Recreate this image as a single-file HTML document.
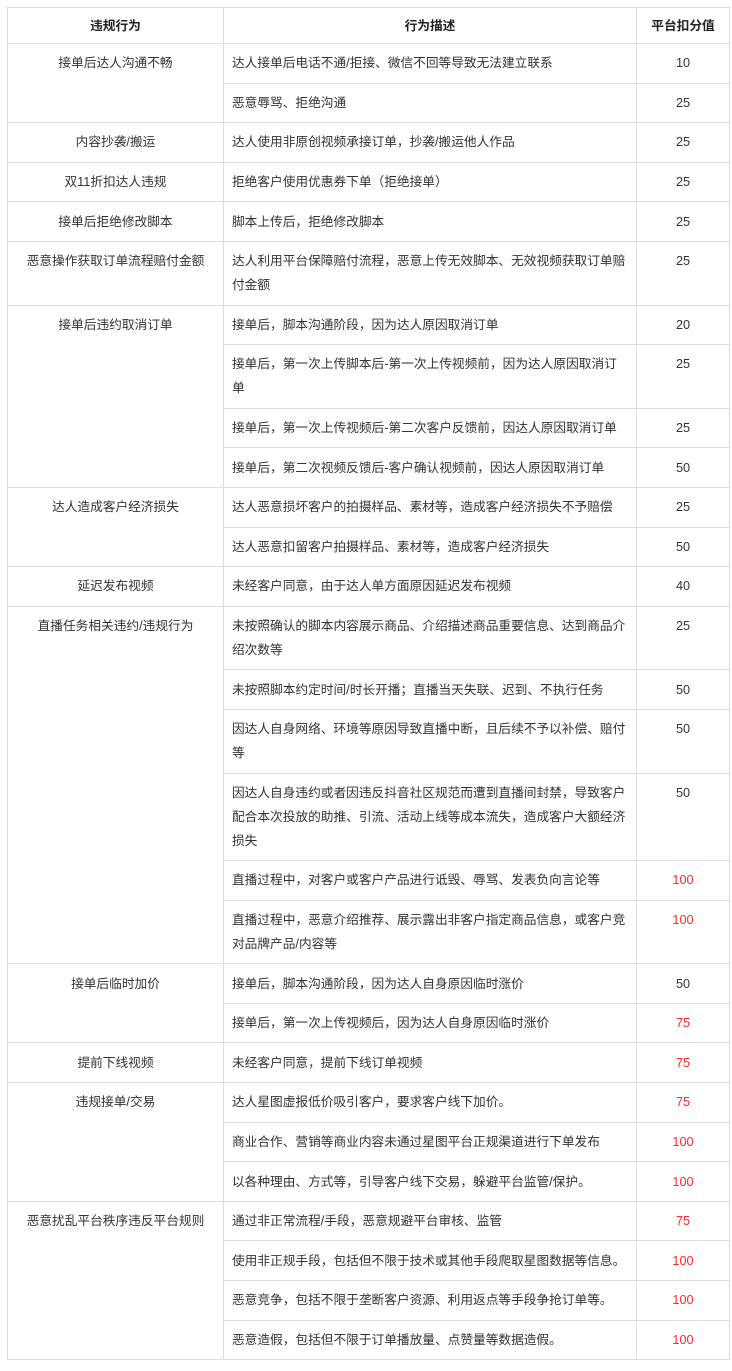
<!DOCTYPE html>
<html><head><meta charset="utf-8"><style>
html,body{margin:0;padding:0;background:#fff;width:732px;height:1371px;overflow:hidden}
table{position:absolute;left:7px;top:7px;border-collapse:collapse;table-layout:fixed;width:722px;font-family:"Liberation Sans","Noto Sans CJK SC",sans-serif;font-size:12.7px;color:#333}
td,th{border:1px solid #ddd;padding:7.3px 8px;vertical-align:top;white-space:nowrap;overflow:visible}
td div{line-height:24px;height:24px;overflow:visible}
td div.d{height:48px}
td div.t{height:72px}
th{font-weight:bold;text-align:center;padding:7.5px 8px 7.5px;color:#222}
th div{height:20px;line-height:20px}
td.a,td.c{text-align:center}
.r{color:#ff2a2a}
</style></head><body>
<table>
<colgroup><col style="width:216px"><col style="width:413px"><col style="width:93px"></colgroup>
<tr><th><div>违规行为</div></th><th><div>行为描述</div></th><th><div>平台扣分值</div></th></tr>
<tr><td class="a" rowspan="2"><div>接单后达人沟通不畅</div></td><td><div>达人接单后电话不通/拒接、微信不回等导致无法建立联系</div></td><td class="c"><div>10</div></td></tr>
<tr><td><div>恶意辱骂、拒绝沟通</div></td><td class="c"><div>25</div></td></tr>
<tr><td class="a"><div>内容抄袭/搬运</div></td><td><div>达人使用非原创视频承接订单，抄袭/搬运他人作品</div></td><td class="c"><div>25</div></td></tr>
<tr><td class="a"><div>双11折扣达人违规</div></td><td><div>拒绝客户使用优惠券下单（拒绝接单）</div></td><td class="c"><div>25</div></td></tr>
<tr><td class="a"><div>接单后拒绝修改脚本</div></td><td><div>脚本上传后，拒绝修改脚本</div></td><td class="c"><div>25</div></td></tr>
<tr><td class="a"><div>恶意操作获取订单流程赔付金额</div></td><td><div class="d">达人利用平台保障赔付流程，恶意上传无效脚本、无效视频获取订单赔<br>付金额</div></td><td class="c"><div>25</div></td></tr>
<tr><td class="a" rowspan="4"><div>接单后违约取消订单</div></td><td><div>接单后，脚本沟通阶段，因为达人原因取消订单</div></td><td class="c"><div>20</div></td></tr>
<tr><td><div class="d">接单后，第一次上传脚本后-第一次上传视频前，因为达人原因取消订<br>单</div></td><td class="c"><div>25</div></td></tr>
<tr><td><div>接单后，第一次上传视频后-第二次客户反馈前，因达人原因取消订单</div></td><td class="c"><div>25</div></td></tr>
<tr><td><div>接单后，第二次视频反馈后-客户确认视频前，因达人原因取消订单</div></td><td class="c"><div>50</div></td></tr>
<tr><td class="a" rowspan="2"><div>达人造成客户经济损失</div></td><td><div>达人恶意损坏客户的拍摄样品、素材等，造成客户经济损失不予赔偿</div></td><td class="c"><div>25</div></td></tr>
<tr><td><div>达人恶意扣留客户拍摄样品、素材等，造成客户经济损失</div></td><td class="c"><div>50</div></td></tr>
<tr><td class="a"><div>延迟发布视频</div></td><td><div>未经客户同意，由于达人单方面原因延迟发布视频</div></td><td class="c"><div>40</div></td></tr>
<tr><td class="a" rowspan="6"><div>直播任务相关违约/违规行为</div></td><td><div class="d">未按照确认的脚本内容展示商品、介绍描述商品重要信息、达到商品介<br>绍次数等</div></td><td class="c"><div>25</div></td></tr>
<tr><td><div>未按照脚本约定时间/时长开播；直播当天失联、迟到、不执行任务</div></td><td class="c"><div>50</div></td></tr>
<tr><td><div class="d">因达人自身网络、环境等原因导致直播中断，且后续不予以补偿、赔付<br>等</div></td><td class="c"><div>50</div></td></tr>
<tr><td><div class="t">因达人自身违约或者因违反抖音社区规范而遭到直播间封禁，导致客户<br>配合本次投放的助推、引流、活动上线等成本流失，造成客户大额经济<br>损失</div></td><td class="c"><div>50</div></td></tr>
<tr><td><div>直播过程中，对客户或客户产品进行诋毁、辱骂、发表负向言论等</div></td><td class="c r"><div>100</div></td></tr>
<tr><td><div class="d">直播过程中，恶意介绍推荐、展示露出非客户指定商品信息，或客户竞<br>对品牌产品/内容等</div></td><td class="c r"><div>100</div></td></tr>
<tr><td class="a" rowspan="2"><div>接单后临时加价</div></td><td><div>接单后，脚本沟通阶段，因为达人自身原因临时涨价</div></td><td class="c"><div>50</div></td></tr>
<tr><td><div>接单后，第一次上传视频后，因为达人自身原因临时涨价</div></td><td class="c r"><div>75</div></td></tr>
<tr><td class="a"><div>提前下线视频</div></td><td><div>未经客户同意，提前下线订单视频</div></td><td class="c r"><div>75</div></td></tr>
<tr><td class="a" rowspan="3"><div>违规接单/交易</div></td><td><div>达人星图虚报低价吸引客户，要求客户线下加价。</div></td><td class="c r"><div>75</div></td></tr>
<tr><td><div>商业合作、营销等商业内容未通过星图平台正规渠道进行下单发布</div></td><td class="c r"><div>100</div></td></tr>
<tr><td><div>以各种理由、方式等，引导客户线下交易，躲避平台监管/保护。</div></td><td class="c r"><div>100</div></td></tr>
<tr><td class="a" rowspan="4"><div>恶意扰乱平台秩序违反平台规则</div></td><td><div>通过非正常流程/手段，恶意规避平台审核、监管</div></td><td class="c r"><div>75</div></td></tr>
<tr><td><div>使用非正规手段，包括但不限于技术或其他手段爬取星图数据等信息。</div></td><td class="c r"><div>100</div></td></tr>
<tr><td><div>恶意竞争，包括不限于垄断客户资源、利用返点等手段争抢订单等。</div></td><td class="c r"><div>100</div></td></tr>
<tr><td><div>恶意造假，包括但不限于订单播放量、点赞量等数据造假。</div></td><td class="c r"><div>100</div></td></tr>
</table>
</body></html>
